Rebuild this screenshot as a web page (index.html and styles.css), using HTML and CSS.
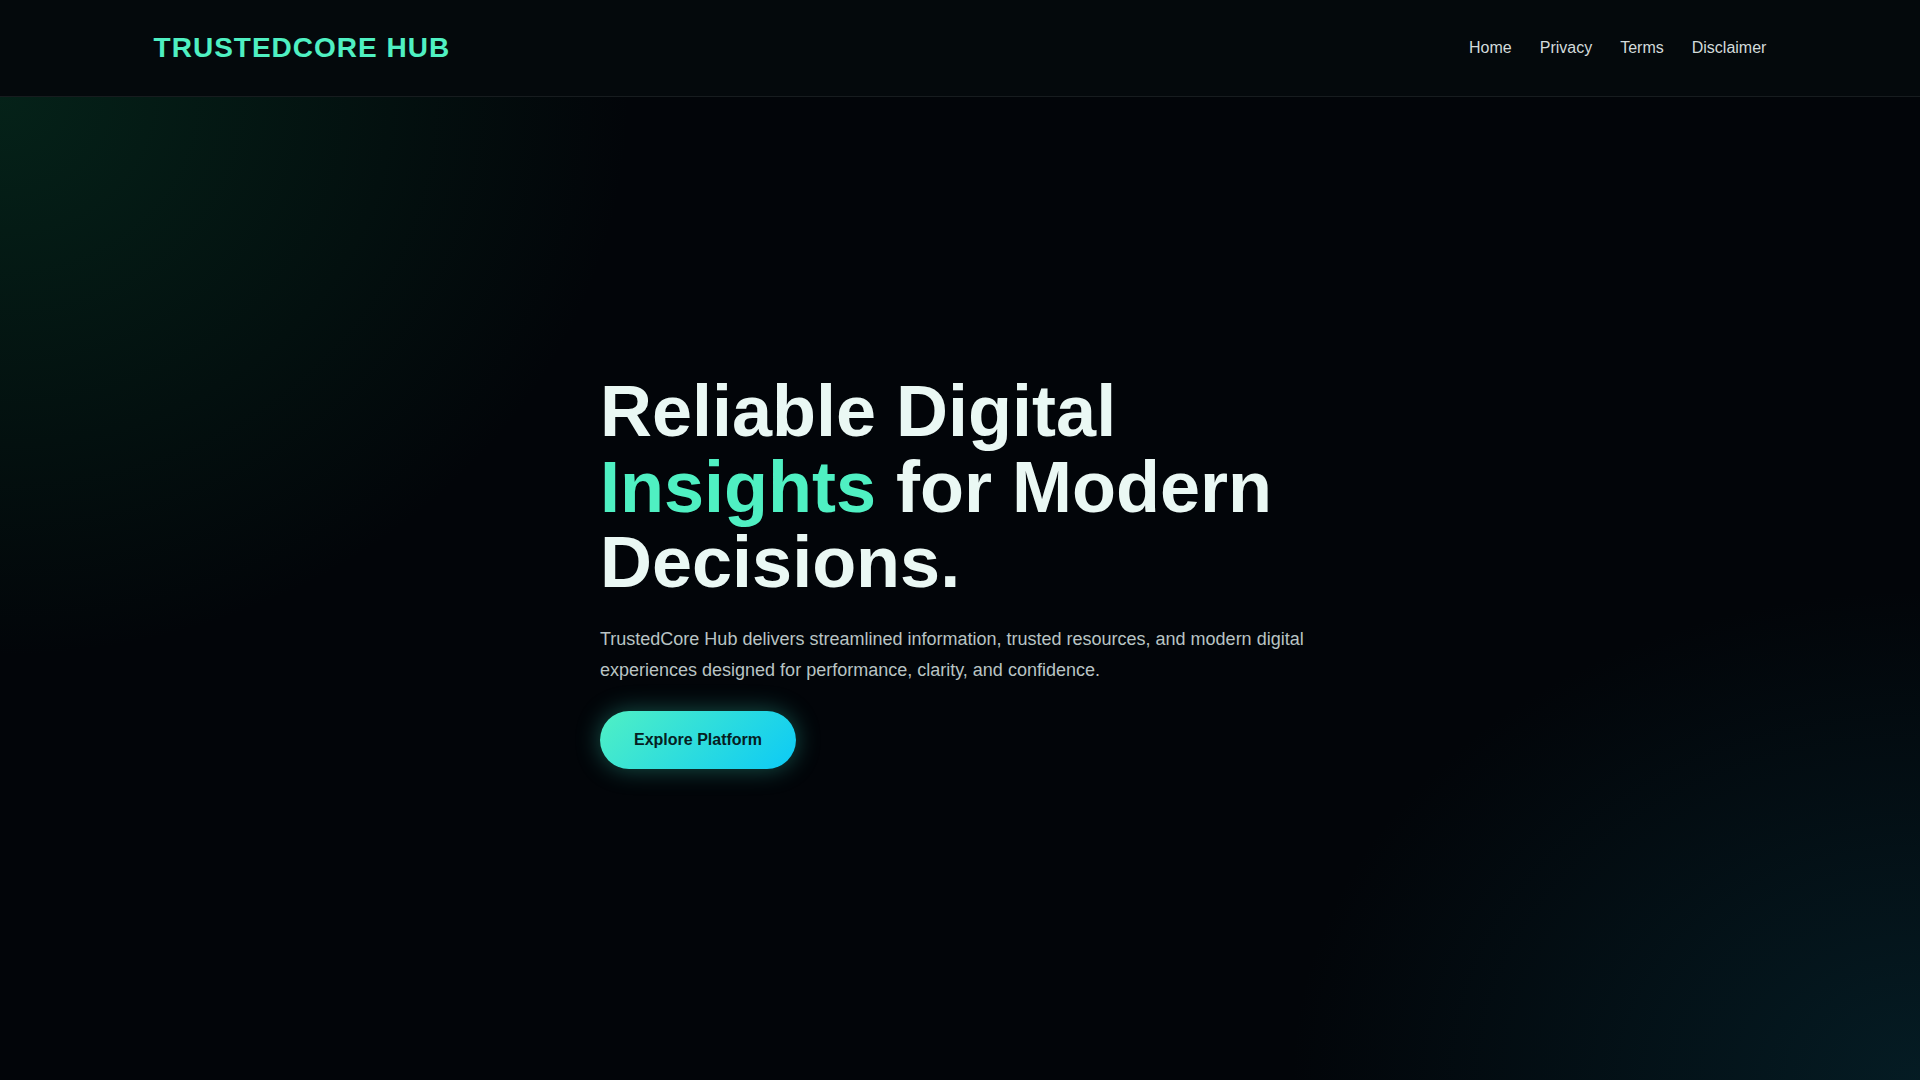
FILE: index.html
```html
<!DOCTYPE html>
<html lang="en">
<head>
<meta charset="utf-8">
<title>TrustedCore Hub</title>
<link rel="stylesheet" href="styles.css">
</head>
<body>
<header class="site-header">
  <a class="logo" href="#">TRUSTEDCORE HUB</a>
  <nav class="nav">
    <a href="#">Home</a>
    <a href="#">Privacy</a>
    <a href="#">Terms</a>
    <a href="#">Disclaimer</a>
  </nav>
</header>
<main class="hero">
  <div class="hero-content">
    <h1 class="hero-title">Reliable Digital <span class="accent">Insights</span> for Modern Decisions.</h1>
    <p class="hero-text">TrustedCore Hub delivers streamlined information, trusted resources, and modern digital experiences designed for performance, clarity, and confidence.</p>
    <a class="btn" href="#">Explore Platform</a>
  </div>
</main>
</body>
</html>
```

FILE: styles.css
```css
* { box-sizing: border-box; }
html, body { margin: 0; padding: 0; }
body {
  font-family: "Liberation Sans", Arial, sans-serif;
  background: #020509;
  color: #eaf8f4;
  min-height: 100vh;
}
a { text-decoration: none; color: inherit; }

.site-header {
  height: 97px;
  display: flex;
  align-items: center;
  justify-content: space-between;
  padding: 0 8%;
  background: #04090c;
  border-bottom: 1px solid rgba(255,255,255,0.08);
}
.logo {
  font-size: 28px;
  font-weight: 700;
  letter-spacing: 1px;
  color: #4ff0c2;
}
.nav {
  display: flex;
  gap: 28px;
}
.nav a {
  font-size: 16px;
  color: #d3dbdb;
}

.hero {
  min-height: calc(100vh - 97px);
  display: flex;
  align-items: center;
  justify-content: center;
  padding-bottom: 36px;
  background:
    radial-gradient(ellipse 900px 800px at 0% 0%, rgba(10, 90, 55, 0.34), rgba(10, 90, 55, 0) 70%),
    radial-gradient(ellipse 900px 700px at 100% 100%, rgba(10, 70, 85, 0.35), rgba(10, 70, 85, 0) 70%),
    #020509;
}
.hero-content {
  width: 720px;
}
.hero-title {
  margin: 0 0 23px;
  padding-top: 2px;
  font-size: 72px;
  line-height: 1.05;
  font-weight: 700;
  color: #eaf8f4;
}
.accent { color: #4ff0c2; }
.hero-text {
  margin: 0 0 24px;
  font-size: 18px;
  line-height: 1.75;
  color: #b9c4c4;
}
.btn {
  display: inline-block;
  padding: 20px 34px;
  border-radius: 999px;
  font-size: 16px;
  font-weight: 700;
  color: #06201f;
  background: linear-gradient(135deg, #50f0c4 0%, #0ccaf6 100%);
  box-shadow: 0 0 24px rgba(60, 230, 200, 0.35);
}
```
